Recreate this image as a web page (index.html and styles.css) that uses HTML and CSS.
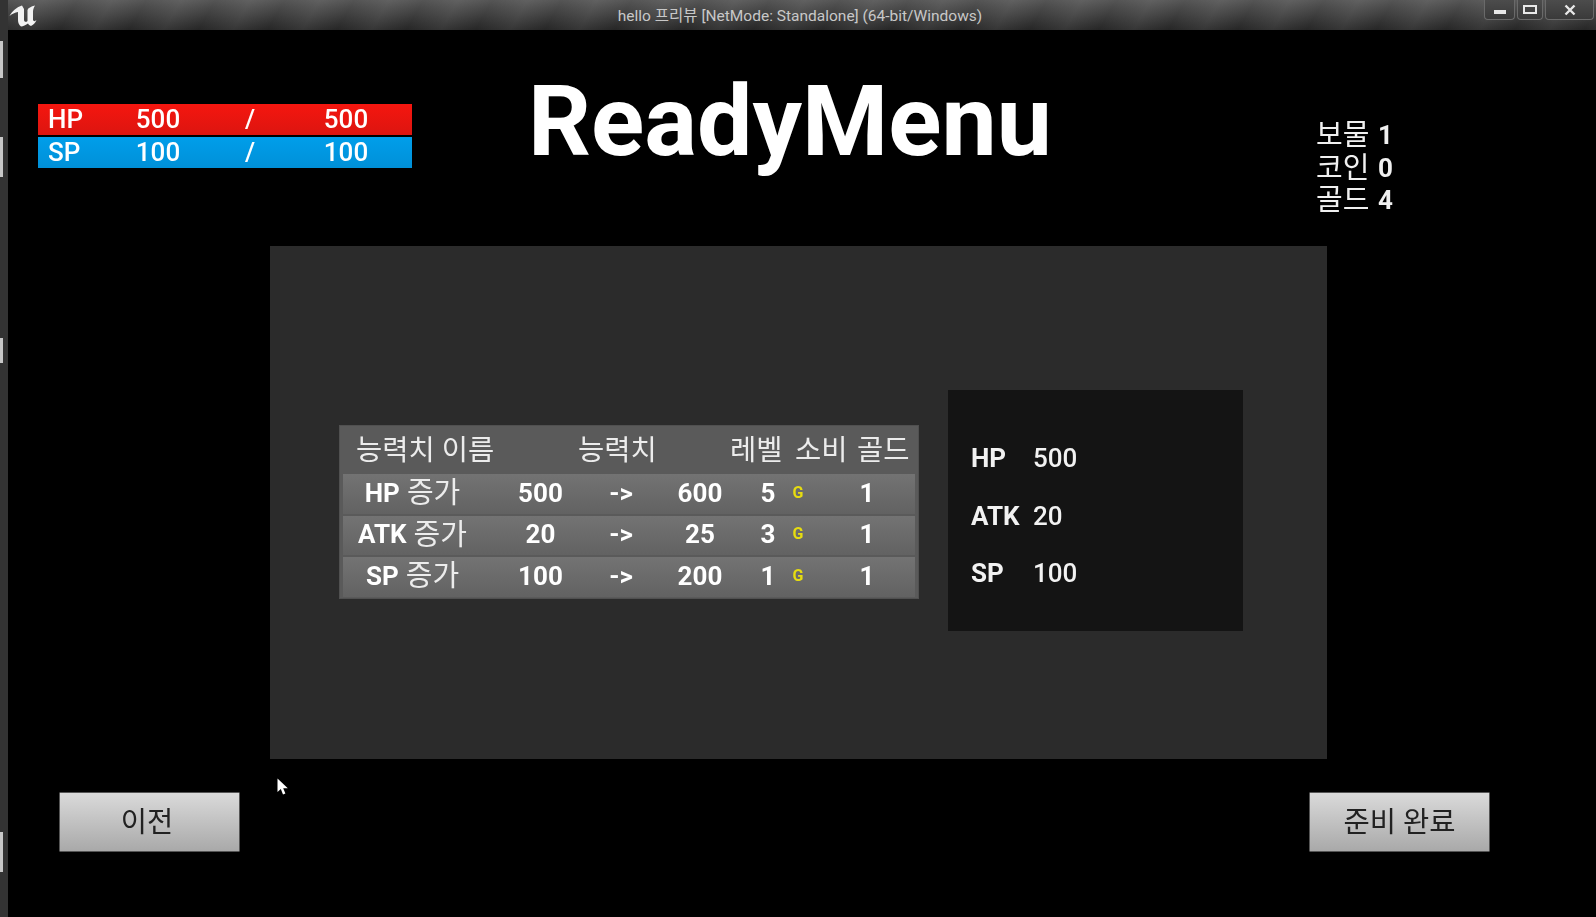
FILE: index.html
```html
<!DOCTYPE html>
<html lang="ko">
<head>
    <meta charset="UTF-8">
    <meta name="viewport" content="width=device-width, initial-scale=1.0">
    <title>hello 프리뷰</title>
    <link rel="stylesheet" href="styles.css">
</head>
<body>
    <div class="desktop-strip">
        <span class="strip-piece strip-a"></span>
        <span class="strip-piece strip-b"></span>
        <span class="strip-piece strip-c"></span>
        <span class="strip-piece strip-d"></span>
    </div>

    <div class="game-window">
        <header class="title-bar">
            <svg class="ue-logo" viewBox="0 0 28 24" width="28" height="24">
                <path fill="#f2f2f2" d="M0.5 12C3 7 8 3 13 1.5L15 5V15.5C15 18 17 18.5 18.5 17V6C19 4 22 2.5 26 1.5C24.5 4 24 6 24 8V16C24.5 17.5 26 17.5 27.5 16C26.5 19 24 21 22 22C20.5 21.5 19.5 20.5 19 19.5C17 21 14 22.5 12 22.5C10 21 9 19 9 16V8C6 8.5 3 10 0.5 12Z"/>
            </svg>
            <span class="window-title">hello 프리뷰 [NetMode: Standalone] (64-bit/Windows)</span>
            <div class="window-controls">
                <button class="win-btn win-min"><span class="icon-min"></span></button>
                <button class="win-btn win-max"><span class="icon-max"></span></button>
                <button class="win-btn win-close">
                    <svg viewBox="0 0 12 12" width="12" height="12">
                        <path d="M1.5 1.5L10.5 10.5M10.5 1.5L1.5 10.5" stroke="#e8e8e8" stroke-width="2.4" fill="none"/>
                    </svg>
                </button>
            </div>
        </header>

        <section class="top-row">
            <div class="vitals">
                <div class="vital-bar vital-hp">
                    <span class="vital-name">HP</span>
                    <span>500</span>
                    <span>/</span>
                    <span>500</span>
                </div>
                <div class="vital-bar vital-sp">
                    <span class="vital-name">SP</span>
                    <span>100</span>
                    <span>/</span>
                    <span>100</span>
                </div>
            </div>

            <h1 class="menu-title">ReadyMenu</h1>

            <ul class="loot-list">
                <li><span class="loot-name">보물</span><b>1</b></li>
                <li><span class="loot-name">코인</span><b>0</b></li>
                <li><span class="loot-name">골드</span><b>4</b></li>
            </ul>
        </section>

        <main class="ready-panel">
            <div class="upgrade-table">
                <div class="upgrade-head">
                    <span>능력치 이름</span>
                    <span>능력치</span>
                    <span>레벨</span>
                    <span>소비</span>
                    <span>골드</span>
                </div>
                <div class="upgrade-row">
                    <span class="upgrade-name">HP <span class="ko">증가</span></span><span>500</span><span>-&gt;</span><span>600</span><span>5</span><span class="gold-mark">G</span><span class="gold-cost">1</span>
                </div>
                <div class="upgrade-row">
                    <span class="upgrade-name">ATK <span class="ko">증가</span></span><span>20</span><span>-&gt;</span><span>25</span><span>3</span><span class="gold-mark">G</span><span class="gold-cost">1</span>
                </div>
                <div class="upgrade-row">
                    <span class="upgrade-name">SP <span class="ko">증가</span></span><span>100</span><span>-&gt;</span><span>200</span><span>1</span><span class="gold-mark">G</span><span class="gold-cost">1</span>
                </div>
            </div>

            <div class="stat-box">
                <div class="stat-line"><span class="stat-name">HP</span><span>500</span></div>
                <div class="stat-line"><span class="stat-name">ATK</span><span>20</span></div>
                <div class="stat-line"><span class="stat-name">SP</span><span>100</span></div>
            </div>
        </main>

        <footer class="bottom-row">
            <button class="menu-btn menu-btn-prev">이전</button>
            <button class="menu-btn">준비 완료</button>
        </footer>

        <svg class="mouse-cursor" viewBox="0 0 12 18" width="12" height="18">
            <path fill="#fff" d="M0.5 0.5V14L3.8 11L6 16.5L8.4 15.5L6.2 10.2H10.8Z"/>
        </svg>
    </div>
</body>
</html>
```

FILE: styles.css
```css
html,
body {
    height: 100%;
}

body {
    margin: 0;
    display: flex;
    overflow: hidden;
    background-color: #000;
    color: #fff;
    font-family: Roboto, "Noto Sans CJK KR", sans-serif;
}

/* Sliver of the desktop behind the window */
.desktop-strip {
    flex: 0 0 8px;
    display: flex;
    flex-direction: column;
    align-items: flex-start;
    background-color: #333;
    filter: blur(0.5px);
}

.strip-piece {
    width: 3px;
    background-color: #c8c8c8;
}

.strip-a {
    height: 37px;
    margin-top: 41px;
}

.strip-b {
    height: 40px;
    margin-top: 59px;
}

.strip-c {
    height: 25px;
    margin-top: 161px;
}

.strip-d {
    height: 40px;
    margin-top: 469px;
}

/* The capture is a little soft, so the whole window gets a slight blur */
.game-window {
    flex: 1;
    position: relative;
    min-width: 0;
    filter: blur(0.5px);
}

/* Title bar */
.title-bar {
    height: 30px;
    display: flex;
    align-items: center;
    justify-content: center;
    position: relative;
    background:
        repeating-linear-gradient(120deg, rgba(255, 255, 255, 0) 0, rgba(255, 255, 255, 0.07) 30px, rgba(255, 255, 255, 0) 60px),
        linear-gradient(#555, #262626);
}

.ue-logo {
    position: absolute;
    left: 1px;
    top: 4px;
}

.window-title {
    font-size: 15.5px;
    color: #c8c8c8;
    margin: -3px 0 0 -4px;
}

.window-controls {
    position: absolute;
    top: 0;
    right: 2px;
    display: flex;
    gap: 2px;
}

.win-btn {
    height: 20px;
    padding: 0;
    display: flex;
    align-items: center;
    justify-content: center;
    background: linear-gradient(#4c4c4c, #3a3a3a);
    border: 1px solid #6a6a6a;
    border-top: none;
    border-radius: 0 0 4px 4px;
}

.win-min {
    width: 31px;
}

.win-max {
    width: 26px;
}

.win-close {
    width: 49px;
}

.icon-min {
    width: 12px;
    height: 4px;
    margin-top: 4px;
    background-color: #e8e8e8;
}

.icon-max {
    width: 10px;
    height: 5px;
    border: 2px solid #e8e8e8;
}

/* HP / SP, title, loot counters */
.top-row {
    height: 216px;
    display: flex;
    align-items: flex-start;
}

.vitals {
    width: 374px;
    margin: 74px 0 0 30px;
    display: flex;
    flex-direction: column;
    gap: 2px;
}

.vital-bar {
    height: 31px;
    display: grid;
    grid-template-columns: 74px 92px 92px 100px;
    align-items: center;
    font-size: 26px;
    font-weight: 500;
    line-height: 31px;
    text-align: center;
}

.vital-hp {
    background: linear-gradient(#f5160f, #dc1510);
}

.vital-sp {
    background: linear-gradient(#009eea, #0090d8);
}

.vital-name {
    text-align: left;
    padding-left: 10px;
}

.menu-title {
    margin: 37px 0 0 116px;
    font-size: 98.5px;
    line-height: 110px;
    font-weight: 700;
}

.loot-list {
    list-style: none;
    margin: 89px 0 0 auto;
    padding: 0;
    width: 279px;
    font-size: 26px;
    line-height: 32.5px;
    color: #f0f0f0;
}

.loot-list li {
    display: flex;
}

.loot-name {
    width: 62px;
    margin-left: -1px;
    font-size: 29px;
}

/* Centre panel */
.ready-panel {
    width: 1057px;
    height: 513px;
    margin-left: 261.5px;
    padding-left: 69.5px;
    box-sizing: border-box;
    display: flex;
    align-items: flex-start;
    gap: 29px;
    background-color: #2b2b2b;
}

.upgrade-table {
    width: 580px;
    height: 174px;
    margin-top: 179px;
    padding: 0 3px;
    box-sizing: border-box;
    display: flex;
    flex-direction: column;
    gap: 2px;
    background-color: #5a5a5a;
    border: 1px solid #505050;
    font-size: 26px;
    font-weight: 700;
}

.upgrade-head {
    height: 46px;
    padding: 0 0 3px 13px;
    box-sizing: border-box;
    display: grid;
    grid-template-columns: 222px 152px 65px 62px auto;
    align-items: center;
    font-size: 28.5px;
    font-weight: 400;
    color: #ececec;
}

.upgrade-row {
    height: 39.5px;
    padding-bottom: 2px;
    box-sizing: border-box;
    display: grid;
    grid-template-columns: 139px 117px 44px 114px 22px 38px 1fr;
    align-items: center;
    text-align: center;
    line-height: 1;
    background: linear-gradient(#737373, #626262);
}

.upgrade-name {
    display: flex;
    align-items: center;
    justify-content: center;
    gap: 7px;
    white-space: nowrap;
}

.ko {
    margin-top: 2px;
    font-size: 29px;
    font-weight: 400;
    color: #ececec;
}

.gold-mark {
    font-size: 16px;
    color: #e6dc10;
}

.gold-cost {
    padding-left: 2px;
}

.stat-box {
    width: 295px;
    height: 241px;
    margin-top: 144px;
    padding: 53px 0 0 23px;
    box-sizing: border-box;
    display: flex;
    flex-direction: column;
    gap: 27px;
    background-color: #141414;
    font-size: 26px;
    font-weight: 500;
    line-height: 30.5px;
    color: #f2f2f2;
}

.stat-line {
    display: flex;
}

.stat-name {
    width: 62px;
    font-weight: 700;
}

/* Bottom buttons */
.bottom-row {
    margin-top: 33px;
    padding: 0 106px 0 51px;
    display: flex;
    justify-content: space-between;
}

.menu-btn {
    width: 181px;
    height: 60px;
    padding: 0 0 6px;
    background: linear-gradient(#dadada, #a9a9a9);
    border: 1px solid #555;
    border-radius: 1px;
    font-family: inherit;
    font-size: 28.5px;
    color: #222;
}

.menu-btn-prev {
    padding-right: 5px;
}

.mouse-cursor {
    position: absolute;
    left: 269px;
    top: 778px;
}
```
